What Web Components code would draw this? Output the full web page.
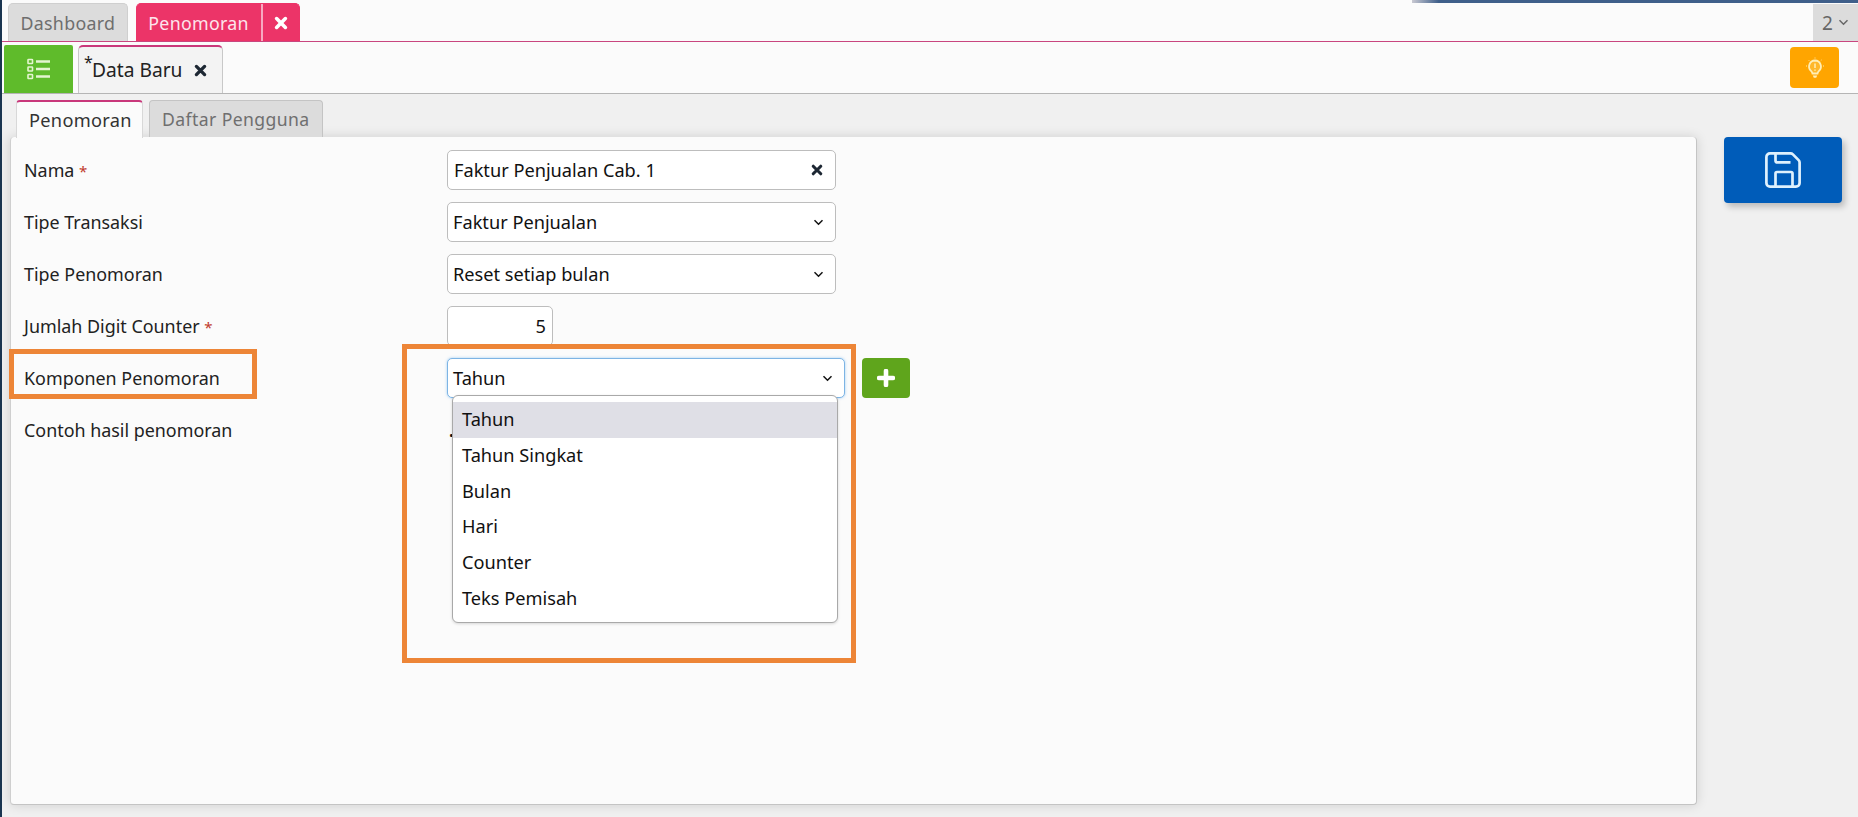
<!DOCTYPE html>
<html lang="id">
<head>
<meta charset="utf-8">
<title>Penomoran</title>
<style>
  html, body { margin: 0; height: 100%; }
  body { font: 17.9px/22px "Noto Sans", sans-serif; color: #222; overflow: hidden; }
  .sample { color: #111; font-weight: 700; padding-left: 2px; }
</style>
</head>
<body>
<app-shell>
  <doc-tab slot="tabs">Dashboard</doc-tab>
  <doc-tab slot="tabs" active closable>Penomoran</doc-tab>
  <form-row label="Nama" required>
    <text-field value="Faktur Penjualan Cab. 1" clearable></text-field>
  </form-row>
  <form-row label="Tipe Transaksi">
    <select-field value="Faktur Penjualan"></select-field>
  </form-row>
  <form-row label="Tipe Penomoran">
    <select-field value="Reset setiap bulan"></select-field>
  </form-row>
  <form-row label="Jumlah Digit Counter" required>
    <text-field value="5" number></text-field>
  </form-row>
  <form-row label="Komponen Penomoran">
    <select-field value="Tahun" focused>
      <drop-list>
        <drop-item selected>Tahun</drop-item>
        <drop-item>Tahun Singkat</drop-item>
        <drop-item>Bulan</drop-item>
        <drop-item>Hari</drop-item>
        <drop-item>Counter</drop-item>
        <drop-item>Teks Pemisah</drop-item>
      </drop-list>
    </select-field>
    <add-button></add-button>
  </form-row>
  <form-row label="Contoh hasil penomoran">
    <span class="sample">.</span>
  </form-row>
</app-shell>

<script>
var icons = {
  times: '<svg width="14" height="14" viewBox="0 0 14 14"><path d="M2.6 2.6l8.8 8.8M11.4 2.6l-8.8 8.8" fill="none" stroke="currentColor" stroke-width="3.6" stroke-linecap="round"/></svg>',
  chevron: '<svg width="11" height="7" viewBox="0 0 10 7"><path d="M1 1.2l4 4 4-4" fill="none" stroke="currentColor" stroke-width="1.5"/></svg>',
  plus: '<svg width="18" height="18" viewBox="0 0 18 18"><path d="M9 2v14M2 9h14" fill="none" stroke="#fff" stroke-width="4.6" stroke-linecap="round"/></svg>',
  list: '<svg width="24" height="22" viewBox="0 0 24 22" fill="none" stroke="#e4f5cf" stroke-width="1.6"><rect x="1" y="1.5" width="4.5" height="4" rx=".6"/><rect x="1" y="9" width="4.5" height="4" rx=".6"/><rect x="1" y="16.5" width="4.5" height="4" rx=".6"/><path d="M9 3.5h14M9 11h14M9 18.500h14" stroke-width="2.6"/></svg>',
  bulb: '<svg width="20" height="22" viewBox="0 0 20 22" fill="none" stroke="#ffeeb5"><path d="M10 3.500a6 6 0 0 0-4 10.400c.9.800 1.300 1.600 1.500 2.600h5c.2-1 .6-1.800 1.500-2.600A6 6 0 0 0 10 3.500z" fill="#ffd978" fill-opacity=".35" stroke-width="1.800"/><path d="M7.800 18.500h4.400l-1 2.300H8.800z" fill="#ffeeb5" stroke="none"/><path d="M10 6.500v4.500M10 12.400v1.300" stroke-width="1.500"/><path d="M10 .5v1M3.500 3l.7.7M16.500 3l-.7.7M1 9h1M18 9h1" stroke-width=".9"/></svg>',
  save: '<svg width="36" height="36" viewBox="0 0 36 36" fill="none" stroke="#dff1fd" stroke-width="2.700" stroke-linejoin="round"><path d="M5 1.400h20.500c.9 0 1.700.3 2.400 1l5.700 5.700c.7.7 1 1.500 1 2.400V31a3.600 3.600 0 0 1-3.600 3.600H5A3.600 3.600 0 0 1 1.400 31V5A3.600 3.600 0 0 1 5 1.400z"/><path d="M10.500 1.400v7a2 2 0 0 0 2 2h13"/><path d="M10.500 34.600V21.500a1.500 1.500 0 0 1 1.500-1.500h14a1.500 1.500 0 0 1 1.500 1.500v13.100"/></svg>'
};

function define(name, html) {
  customElements.define(name, class extends HTMLElement {
    connectedCallback() {
      if (this.shadowRoot) return;
      var root = this.attachShadow({ mode: 'open' });
      root.innerHTML = typeof html === 'function' ? html(this) : html;
    }
  });
}

define('app-shell', `
  <style>
    :host { display: flex; height: 100vh; background: #f0f0f0; }
    .edge { width: 2px; flex: none; background: #1a3550; }
    main { flex: 1; min-width: 0; display: flex; flex-direction: column; }
    .ribbon { height: 3px; flex: none; display: flex; background: #fbfbfb; }
    .ribbon i { margin-left: 1410px; flex: 1; background: linear-gradient(90deg, #c9c9d2, #3f5f8a 6%); }
    .tabs { height: 38px; flex: none; display: flex; gap: 8px; padding-left: 6px; background: #fbfbfb; border-bottom: 1px solid #c9467f; }
    .more { margin-left: auto; width: 45px; background: #dcdcdc; color: #666; display: flex; align-items: center; justify-content: center; gap: 5px; font-size: 19px; margin-top: 1px; }
    .tools { height: 52px; flex: none; display: flex; padding-left: 2px; background: #fbfbfb; border-bottom: 1px solid #b5b5b5; box-sizing: border-box; padding-top: 3px; }
    .menu { width: 69px; background: #5fbb2b; display: flex; align-items: center; justify-content: center; border-radius: 2px 2px 0 0; }
    .page { width: 145px; margin-left: 5px; box-sizing: border-box; background: #f3f3f3; border: 1px solid #c8c8c8; border-bottom: 0; border-top: 2px solid #c9387b; border-radius: 5px 5px 0 0; display: flex; align-items: center; padding: 0 0 0 5px; font-size: 19.2px; }
    .page sup { font-size: 16px; line-height: 1; align-self: flex-start; margin-top: 7px; width: 8px; }
    .page span { margin-right: 12px; }
    .page svg { width: 13px; height: 13px; color: #1d2733; }
    .bulb { margin: 2px 19px 0 auto; width: 49px; height: 41px; background: #ffa500; border-radius: 4px; display: flex; align-items: center; justify-content: center; }
    .body { flex: 1; min-height: 0; display: flex; padding: 6px 16px 12px 8px; }
    .left { width: 1687px; flex: none; display: flex; flex-direction: column; }
    .subtabs { display: flex; gap: 6px; padding-left: 6px; height: 38px; flex: none; position: relative; z-index: 1; }
    .subtab { height: 37px; box-sizing: border-box; padding: 0 12px; display: flex; align-items: center; border: 1px solid #c4c4c4; border-bottom: 0; border-radius: 4px 4px 0 0; background: #dcdcdc; color: #6f6f6f; font-size: 17.6px; letter-spacing: .4px; }
    .subtab.on { height: 38px; width: 127px; background: #fbfbfb; color: #333; letter-spacing: .3px; font-size: 18.2px; border-top: 2px solid #c9387b; border-color: #c9387b #d8d8d8 #fbfbfb; }
    .panel { flex: 1; position: relative; background: #fbfbfb; border-radius: 4px; border-right: 1px solid #c4c4c4; border-bottom: 1px solid #c4c4c4; border-left: 1px solid #cfcfcf; box-sizing: border-box; box-shadow: 0 0 12px rgba(0,0,0,.14); margin-top: -1px; padding: 13px 0 0; }
    .mark { position: absolute; box-sizing: border-box; border: 5px solid #ed8537; pointer-events: none; z-index: 2; }
    .mark.label { left: -2px; top: 212px; width: 248px; height: 50px; }
    .mark.pick { left: 391px; top: 207px; width: 454px; height: 319px; }
    .save { margin: 37px 0 0 27px; width: 118px; height: 66px; background: #005cb9; border-radius: 4px; display: flex; align-items: center; justify-content: center; box-shadow: 3px 4px 6px rgba(0,0,0,.22); flex: none; }
  </style>
  <div class="edge"></div>
  <main>
    <div class="ribbon"><i></i></div>
    <div class="tabs"><slot name="tabs"></slot><div class="more">2 ${icons.chevron}</div></div>
    <div class="tools">
      <div class="menu">${icons.list}</div>
      <div class="page"><sup>*</sup><span>Data Baru</span>${icons.times}</div>
      <div class="bulb">${icons.bulb}</div>
    </div>
    <div class="body">
      <div class="left">
        <div class="subtabs"><div class="subtab on">Penomoran</div><div class="subtab">Daftar Pengguna</div></div>
        <div class="panel">
          <slot></slot>
          <div class="mark label"></div>
          <div class="mark pick"></div>
        </div>
      </div>
      <div class="save">${icons.save}</div>
    </div>
  </main>`);

define('doc-tab', function (el) {
  return `
  <style>
    :host { display: block; height: 38px; box-sizing: border-box; border-radius: 5px 5px 0 0; background: #dcdcdc; color: #6e6e6e; border: 1px solid #cfcfcf; border-bottom: 0; font-size: 17.8px; letter-spacing: .3px; }
    :host([active]) { background: #ec3468; color: #fde4ec; border-color: #ec3468; }
    .in { display: flex; align-items: center; height: 100%; padding: 0 11.500px; }
    :host([active]) .in { padding-right: 0; }
    .x { margin-left: 12px; width: 36px; height: 100%; border-left: 2px solid #f7a9c0; display: flex; align-items: center; justify-content: center; color: #fff; }
  </style>
  <div class="in"><slot></slot>${el.hasAttribute('closable') ? '<span class="x">' + icons.times + '</span>' : ''}</div>`;
});

define('form-row', function (el) {
  var star = el.hasAttribute('required') ? ' <b>*</b>' : '';
  return `
  <style>
    :host { display: grid; grid-template-columns: 436px 1fr; height: 40px; margin-bottom: 12px; align-items: center; }
    label { padding-left: 13px; }
    b { color: #c0392b; font-weight: 400; font-size: 15px; }
    .val { display: flex; gap: 17px; height: 40px; align-items: center; }
  </style>
  <label>${el.getAttribute('label')}${star}</label>
  <div class="val"><slot></slot></div>`;
});

define('text-field', function (el) {
  var num = el.hasAttribute('number');
  return `
  <style>
    :host { display: block; width: ${num ? 106 : 389}px; height: 40px; box-sizing: border-box; background: #fff; border: 1px solid #bdbdbd; border-radius: 5px; }
    .in { display: flex; align-items: center; justify-content: ${num ? 'flex-end' : 'space-between'}; height: 100%; padding: 0 12px 0 6px; font-size: 18.2px; color: #111; }
    :host([number]) .in { padding-right: 6px; }
    svg { width: 12px; height: 12px; color: #1d2733; }
  </style>
  <div class="in"><span>${el.getAttribute('value')}</span>${el.hasAttribute('clearable') ? icons.times : ''}</div>`;
});

define('select-field', function (el) {
  return `
  <style>
    :host { display: block; position: relative; width: 389px; height: 40px; box-sizing: border-box; background: #fff; border: 1px solid #bdbdbd; border-radius: 5px; }
    :host([focused]) { width: 398px; border-color: #7db4e4; box-shadow: 0 0 3px rgba(90,170,240,.55); }
    .in { display: flex; align-items: center; justify-content: space-between; height: 100%; padding: 0 11px 0 5px; font-size: 18.2px; color: #111; }
  </style>
  <div class="in"><span>${el.getAttribute('value')}</span>${icons.chevron}</div>
  <slot></slot>`;
});

define('drop-list', `
  <style>
    :host { position: absolute; left: 4px; top: 36px; width: 386px; box-sizing: border-box; padding: 6px 0 5px; background: #fff; border: 1px solid #a9a9a9; border-radius: 6px; box-shadow: 0 1px 3px rgba(0,0,0,.15); z-index: 1; }
  </style>
  <slot></slot>`);

define('drop-item', `
  <style>
    :host { display: block; height: 35.800px; line-height: 35.800px; padding: 0 9px; font-size: 18.2px; color: #111; }
    :host([selected]) { background: #dfdfe6; }
  </style>
  <slot></slot>`);

define('add-button', `
  <style>
    :host { display: flex; width: 48px; height: 40px; background: #5fa51c; border-radius: 4px; align-items: center; justify-content: center; }
  </style>
  ${icons.plus}`);
</script>
</body>
</html>
